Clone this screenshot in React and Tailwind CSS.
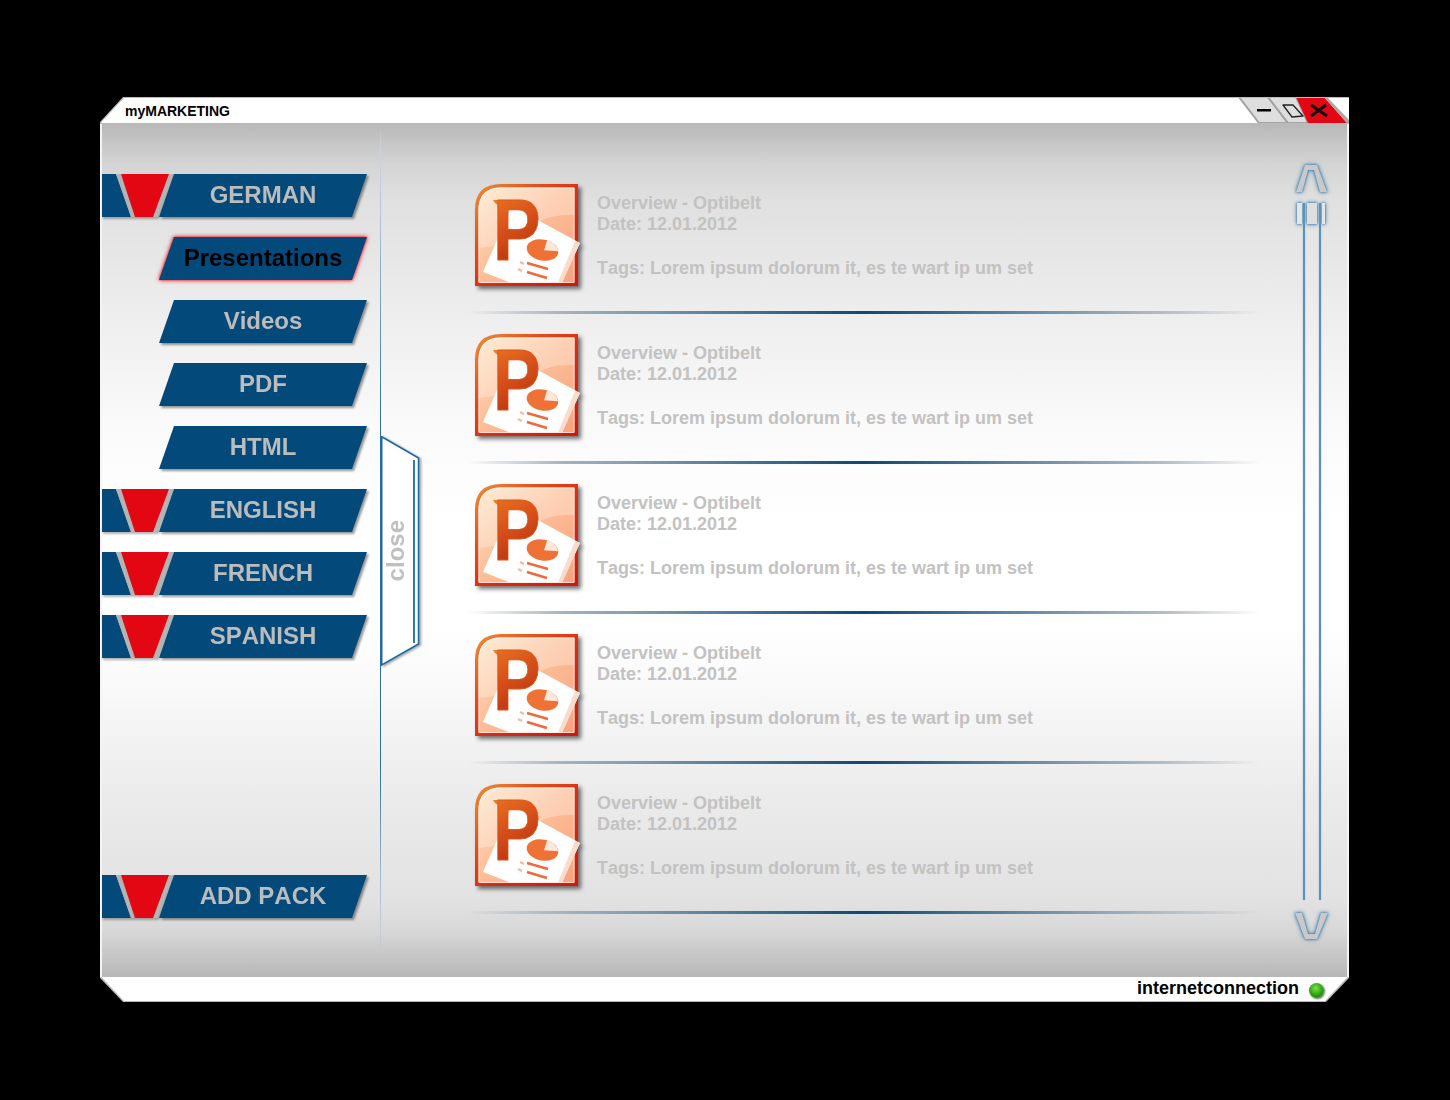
const submenu = ["Presentations", "Videos", "PDF", "HTML"];
const otherLanguages = ["ENGLISH", "FRENCH", "SPANISH"];
const files = [1, 2, 3, 4, 5];

function Marker() {
  return (
    <svg width="57" height="43" viewBox="0 0 57 43" className="shrink-0 overflow-visible drop-shadow-[1px_2px_1px_rgba(0,0,0,0.3)]">
      <polygon points="0,0 14,0 29,43 0,43" fill="#03497a" />
      <polygon points="14,0 19,0 33,43 29,43" fill="#b4b4b4" />
      <polygon points="67,0 72,0 56,43 51,43" fill="#b4b4b4" />
      <polygon points="19,0 67,0 51,43 33,43" fill="#e30613" />
    </svg>
  );
}

function NavButton({ label, active }) {
  return (
    <div className={active ? "w-[208px] [filter:drop-shadow(0_0_1px_#f0343c)_drop-shadow(0_0_2px_#f0343c)]" : "w-[208px] drop-shadow-[2px_2px_1px_rgba(0,0,0,0.4)]"}>
      <div className={`flex h-[43px] items-center justify-center bg-[#03497a] pb-[2px] text-2xl font-bold [clip-path:polygon(15px_0,100%_0,193px_100%,0_100%)] ${active ? "text-black" : "text-[#bcbcbc]"}`}>
        {label}
      </div>
    </div>
  );
}

function Language({ label }) {
  return (
    <div className="flex">
      <Marker />
      <NavButton label={label} />
    </div>
  );
}

function PowerPointIcon() {
  return (
    <svg width="108" height="108" viewBox="0 0 108 108" className="shrink-0 overflow-visible drop-shadow-[3px_3px_2px_rgba(0,0,0,0.55)]">
      <defs>
        <linearGradient id="ppBase" x1="0" y1="0" x2="1" y2="1">
          <stop offset="0" stopColor="#fee6c8" />
          <stop offset="0.5" stopColor="#fcbc96" />
          <stop offset="1" stopColor="#f8a27c" />
        </linearGradient>
        <linearGradient id="ppFrame" x1="0" y1="0" x2="1" y2="1">
          <stop offset="0" stopColor="#ee8a3a" />
          <stop offset="0.3" stopColor="#e4501a" />
          <stop offset="0.55" stopColor="#dc2c12" />
          <stop offset="1" stopColor="#d0180c" />
        </linearGradient>
        <linearGradient id="ppLetter" x1="0" y1="0" x2="0.3" y2="1">
          <stop offset="0" stopColor="#f08222" />
          <stop offset="0.5" stopColor="#d9521a" />
          <stop offset="1" stopColor="#b32c0e" />
        </linearGradient>
      </defs>
      <path d="M26 1.75H101.25V100.25H1.75V26Q1.75 1.75 26 1.75Z" fill="url(#ppBase)" stroke="url(#ppFrame)" strokeWidth="3.5" />
      <path d="M3.5 26Q3.5 3.5 26 3.5H99.5V31Q70 30 55 44Q35 62 3.5 64Z" fill="#fff" opacity="0.28" />
      <path d="M26 4H99V98.5H4V26Q4 4 26 4Z" fill="none" stroke="#fff" strokeWidth="1" opacity="0.75" />
      <polygon points="37,22 105,59 87,98.5 35,98.5 8,88" fill="#fff" />
      <polygon points="87,98.5 105,59 100,57 83,98.5" fill="#f9dccb" />
      <polygon points="18,16 26,16 26,23 20,19" fill="#ef7e22" />
      <text transform="translate(18 76) scale(0.82 1)" fontFamily="'Liberation Sans', sans-serif" fontWeight="700" fontSize="87" fill="url(#ppLetter)" stroke="#d9581c" strokeWidth="0.8">P</text>
      <g transform="rotate(12 67.5 66)">
        <ellipse cx="67.5" cy="66" rx="16" ry="10.5" fill="#ee7236" />
        <path d="M69 66L70 55.6Q80 56.5 83 64Z" fill="#fde6da" />
      </g>
      <line x1="52" y1="79" x2="73" y2="85" stroke="#ee6a3c" strokeWidth="2.4" />
      <line x1="52" y1="88" x2="72" y2="94" stroke="#ee6a3c" strokeWidth="2.4" />
      <line x1="45" y1="78" x2="49" y2="80" stroke="#f8b9a2" strokeWidth="2.4" />
      <line x1="43" y1="85" x2="47" y2="87" stroke="#f8b9a2" strokeWidth="2.4" />
    </svg>
  );
}

function FileRow() {
  return (
    <div className="h-[150px]">
      <div className="flex h-[127px]">
        <div className="w-[122px]">
          <PowerPointIcon />
        </div>
        <div className="pt-[9px] text-lg leading-[21px] font-bold text-[#c2c2c2]">
          <p>Overview - Optibelt</p>
          <p>Date: 12.01.2012</p>
          <p className="mt-[23px]">Tags: Lorem ipsum dolorum it, es te wart ip um set</p>
        </div>
      </div>
      <div className="-ml-[7px] h-[3px] w-[792px] bg-[linear-gradient(to_right,transparent_0%,#a4b3be_12%,#7e9ab0_22%,#0a4a78_50%,#7e9ab0_76%,#b3bec6_88%,transparent_100%)]" />
    </div>
  );
}

function Scrollbar() {
  const glow = "shrink-0 [filter:drop-shadow(0_0_1px_#2f75a5)_drop-shadow(0_0_2px_#4f8bb5)]";
  return (
    <div className="flex w-[44px] flex-col items-center pt-[39px] pb-[36px]">
      <svg width="34" height="30" viewBox="0 0 34 30" className={glow}>
        <polygon points="1,29 10,2 22,2 32,29 25,29 19,7 13,7 7,29" fill="#c9c9c9" />
      </svg>
      <div className="relative mt-[10px] flex w-[30px] flex-1 flex-col">
        <svg width="30" height="21" viewBox="0 0 30 21" className={glow}>
          <rect x="0" y="0" width="5" height="21" fill="#e6e6e6" />
          <rect x="10" y="0" width="10" height="21" fill="#dedede" />
          <rect x="25" y="0" width="3" height="21" fill="#e6e6e6" />
        </svg>
        {/* track rails run under the thumb */}
        <div className="absolute inset-y-0 left-[6px] w-[2px] bg-[#5b93b8] shadow-[0_0_2px_#9dbdd2]" />
        <div className="absolute inset-y-0 left-[22px] w-[2px] bg-[#5b93b8] shadow-[0_0_2px_#9dbdd2]" />
      </div>
      <svg width="36" height="30" viewBox="0 0 36 30" className={`mt-[11px] ${glow}`}>
        <polygon points="1,2 8,2 14,23 21,23 27,2 34,2 23,28 11,28" fill="#c9c9c9" />
      </svg>
    </div>
  );
}

function WindowControls() {
  return (
    <svg width="114" height="27" viewBox="0 0 114 27" className="shrink-0">
      <polygon points="4,0 33,0 53,26 24,26" fill="#dedede" stroke="#a4a4a4" strokeWidth="2" />
      <polygon points="33,0 61,0 73,26 53,26" fill="#dedede" stroke="#a4a4a4" strokeWidth="2" />
      <polygon points="61,0 89,0 112,26 73,26" fill="#e30613" />
      <polygon points="89,0 92,0 114,23 114,26 112,26" fill="#a8a8a8" />
      <rect x="22" y="12" width="14" height="2.5" fill="#000" />
      <polygon points="48,8 58,8 68,19 57,20" fill="none" stroke="#222" strokeWidth="1.3" strokeLinejoin="round" />
      <path d="M76 8L92 19M91 8L76 19" stroke="#111" strokeWidth="3" />
    </svg>
  );
}

export default function App() {
  return (
    <div className="h-[1100px] bg-black pt-[97px] pl-[100px] font-['Liberation_Sans',Arial,sans-serif] [font-kerning:none]">
      <div className="w-[1249px]">
        {/* TITLE BAR */}
        <div className="h-[27px] bg-[#b9b9b9] [clip-path:polygon(23px_0,100%_0,100%_100%,0_100%,0_25px)]">
          <div className="flex h-[25px] translate-y-px items-center justify-between bg-white pl-[25px] text-sm font-bold text-black [clip-path:polygon(24px_0,100%_0,100%_100%,1.5px_100%,1.5px_24px)]">
            <span>myMARKETING</span>
            <WindowControls />
          </div>
        </div>

        {/* BODY */}
        <div className="relative flex h-[853px] border-x-2 border-[#f4f4f4] bg-[linear-gradient(to_bottom,#b9b9b9_0px,#d4d4d4_40px,#e0e0e0_76px,#ececec_176px,#fafafa_300px,#ffffff_400px,#ffffff_500px,#fafafa_556px,#ebebeb_673px,#e2e2e2_776px,#d8d8d8_806px,#b7b7b7_853px)]">
          {/* SIDEBAR */}
          <div className="flex w-[278px] shrink-0 flex-col gap-[20px] pt-[50px] pb-[59px]">
            <Language label="GERMAN" />
            <div className="flex flex-col gap-[20px] pl-[57px]">
              {submenu.map((item, i) => (
                <NavButton key={item} label={item} active={i === 0} />
              ))}
            </div>
            {otherLanguages.map((l) => (
              <Language key={l} label={l} />
            ))}
            <div className="mt-auto">
              <Language label="ADD PACK" />
            </div>
          </div>
          <div className="w-px shrink-0 bg-[linear-gradient(to_bottom,transparent_0%,#c8d5df_4%,#b5c8d6_10%,#5f93b8_25%,#2a6f9f_35%,#2a6f9f_75%,#9dbbd0_88%,transparent_98%)]" />

          {/* CLOSE TAB */}
          <div className="absolute top-[312px] left-[279px] h-[232px] w-[40px] drop-shadow-[2px_1px_1px_rgba(0,0,0,0.35)]">
            <svg width="40" height="232" viewBox="0 0 40 232" className="absolute inset-0">
              <polygon points="0.75,0.75 37.5,22 37.5,208 0.75,229" fill="#fff" stroke="#1a6aa6" strokeWidth="1.5" />
              <line x1="33" y1="24" x2="33" y2="207" stroke="#1a6aa6" strokeWidth="1.8" />
            </svg>
            <div className="absolute top-0 left-0 flex h-[229px] w-[30px] items-center justify-center">
              <span className="rotate-180 text-2xl leading-none font-bold text-[#c0c0c0] [writing-mode:vertical-rl]">close</span>
            </div>
          </div>

          {/* FILES */}
          <div className="flex-1 pt-[60px] pl-[94px]">
            {files.map((f) => (
              <FileRow key={f} />
            ))}
          </div>

          <Scrollbar />
          <div className="w-[13px] shrink-0" />
        </div>

        {/* FOOTER */}
        <div className="h-[25px] bg-[#b9b9b9] [clip-path:polygon(0_0,100%_0,100%_1px,1226px_100%,23px_100%,0_1px)]">
          <div className="flex h-[24px] items-start justify-end gap-[10px] bg-white pr-[25px] text-lg leading-[22px] font-bold text-black [clip-path:polygon(1.5px_0,1247.5px_0,1225px_100%,24px_100%)]">
            <span>internetconnection</span>
            <span className="mt-[6px] h-[15px] w-[15px] rounded-full bg-[radial-gradient(circle_at_45%_35%,#7fe04a_0%,#2fa514_50%,#0f6b06_100%)] shadow-[1px_1px_2px_rgba(0,0,0,0.6)]" />
          </div>
        </div>
      </div>
    </div>
  );
}
